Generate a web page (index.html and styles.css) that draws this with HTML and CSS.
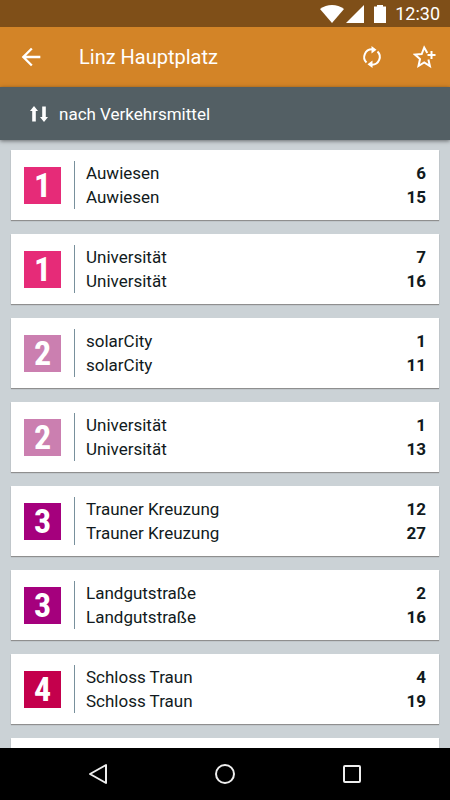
FILE: index.html
```
<!DOCTYPE html>
<html lang="de">
<head>
    <meta charset="UTF-8">
    <meta name="viewport" content="width=device-width, initial-scale=1.0">
    <title>Linz Hauptplatz</title>
    <link rel="stylesheet" href="styles.css">
</head>
<body>
    <div class="status-bar">
        <svg class="wifi" viewBox="0 0 24 18" aria-hidden="true"><path d="M0 4C7-1.300 17-1.300 24 4L12 18z"/></svg>
        <svg class="signal" viewBox="0 0 18 18" aria-hidden="true"><path d="M18 0v18H0z"/></svg>
        <svg class="battery" viewBox="0 0 12 18" aria-hidden="true"><path d="M3 0h6v1.500h3V18H0V1.500h3z"/></svg>
        <span>12:30</span>
    </div>

    <header class="toolbar">
        <button class="icon-btn" type="button" aria-label="Zurück">
            <svg viewBox="0 0 24 24"><path d="M20 11H7.830l5.590-5.590L12 4l-8 8 8 8 1.410-1.410L7.830 13H20z"/></svg>
        </button>
        <h1>Linz Hauptplatz</h1>
        <button class="icon-btn refresh" type="button" aria-label="Aktualisieren">
            <svg viewBox="0 0 24 24"><path class="line" d="M6.500 17.500A7.800 7.800 0 0 1 12 4.200M17.500 6.500A7.800 7.800 0 0 1 12 19.800"/><path d="M11.500 1l5 3.800-5 3.700zM12.500 23l-5-3.800 5-3.700z"/></svg>
        </button>
        <button class="icon-btn favorite" type="button" aria-label="Zu Favoriten hinzufügen">
            <svg viewBox="0 0 24 24"><path class="line" d="M14.300 8L11.200 2.500 8.700 9l-6.700.6 5 4.400-1.500 7 5.700-3.600 5.700 3.600-1.500-6.500M18.500 6v8M14.500 10h8"/></svg>
        </button>
    </header>

    <button class="sort" type="button">
        <svg viewBox="0 0 18 16" aria-hidden="true"><path d="M4 0l4 5H5.800v10.500H2.200V5H0zM14 16l4-5h-2.200V.5h-3.600V11H10z"/></svg>
        nach Verkehrsmittel
    </button>

    <main class="departures">
        <article class="card">
            <span class="line-no line-1">1</span>
            <div class="times">
                <p><span>Auwiesen</span><b>6</b></p>
                <p><span>Auwiesen</span><b>15</b></p>
            </div>
        </article>
        <article class="card">
            <span class="line-no line-1">1</span>
            <div class="times">
                <p><span>Universität</span><b>7</b></p>
                <p><span>Universität</span><b>16</b></p>
            </div>
        </article>
        <article class="card">
            <span class="line-no line-2">2</span>
            <div class="times">
                <p><span>solarCity</span><b>1</b></p>
                <p><span>solarCity</span><b>11</b></p>
            </div>
        </article>
        <article class="card">
            <span class="line-no line-2">2</span>
            <div class="times">
                <p><span>Universität</span><b>1</b></p>
                <p><span>Universität</span><b>13</b></p>
            </div>
        </article>
        <article class="card">
            <span class="line-no line-3">3</span>
            <div class="times">
                <p><span>Trauner Kreuzung</span><b>12</b></p>
                <p><span>Trauner Kreuzung</span><b>27</b></p>
            </div>
        </article>
        <article class="card">
            <span class="line-no line-3">3</span>
            <div class="times">
                <p><span>Landgutstraße</span><b>2</b></p>
                <p><span>Landgutstraße</span><b>16</b></p>
            </div>
        </article>
        <article class="card">
            <span class="line-no line-4">4</span>
            <div class="times">
                <p><span>Schloss Traun</span><b>4</b></p>
                <p><span>Schloss Traun</span><b>19</b></p>
            </div>
        </article>
        <article class="card"></article>
    </main>

    <nav class="nav-bar">
        <button type="button" aria-label="Zurück"><svg viewBox="0 0 24 24"><path d="M20 3v18L4 12z"/></svg></button>
        <button type="button" aria-label="Startseite"><svg viewBox="0 0 24 24"><circle cx="12" cy="12" r="9"/></svg></button>
        <button type="button" aria-label="Übersicht"><svg viewBox="0 0 24 24"><rect x="4" y="4" width="16" height="16" rx="1"/></svg></button>
    </nav>
</body>
</html>
```

FILE: styles.css
```
* {
    box-sizing: border-box;
}

body {
    margin: 0;
    height: 100vh;
    display: flex;
    flex-direction: column;
    overflow: hidden;
    background: #cbd2d6;
    color: #111a20;
    font-family: Roboto, sans-serif;
    font-size: 17px;
}

button {
    padding: 0;
    border: none;
    background: none;
    color: inherit;
    font: inherit;
    cursor: pointer;
}

svg {
    display: block;
    fill: currentColor;
}

.status-bar {
    display: flex;
    align-items: center;
    justify-content: flex-end;
    padding: 0 10px;
    background: #7f4f18;
    color: #fff;
    font-size: 18px;
    line-height: 27px;
}

.wifi {
    width: 24px;
    height: 18px;
}

.signal {
    width: 18px;
    height: 18px;
    margin: 0 10px 0 2px;
}

.battery {
    width: 12px;
    height: 18px;
    margin-right: 9px;
}

.toolbar {
    display: flex;
    align-items: center;
    height: 60px;
    padding: 0 13px 0 17px;
    background: #d38427;
    color: #fff;
}

.toolbar h1 {
    flex: 1;
    margin: 0 0 0 34px;
    font-size: 20px;
    font-weight: 400;
}

.icon-btn svg {
    width: 28px;
    height: 28px;
}

.refresh {
    margin-right: 29px;
}

.refresh svg,
.favorite svg {
    width: 24px;
    height: 24px;
}

.line {
    fill: none;
    stroke: currentColor;
    stroke-width: 2;
}

.sort {
    position: relative;
    display: flex;
    align-items: center;
    gap: 11px;
    height: 53px;
    padding: 0 30px;
    background: #535f64;
    box-shadow: 0 1px 4px rgba(0, 0, 0, 0.5);
    color: #fff;
}

.sort svg {
    width: 18px;
    height: 16px;
}

.departures {
    flex: 1;
    min-height: 0;
    overflow: hidden;
    padding: 10px 11px 0;
}

.card {
    display: flex;
    align-items: center;
    min-height: 70px;
    margin-bottom: 14px;
    padding: 11px 13px;
    background: #fff;
    box-shadow: 0 1px 1px #8f8f8f;
}

.line-no {
    width: 37px;
    margin-right: 13px;
    color: #fff;
    font-family: "Roboto Condensed", "Liberation Sans", sans-serif;
    font-size: 34px;
    font-weight: 700;
    line-height: 37px;
    text-align: center;
}

.line-1 {
    background: #e62b78;
}

.line-2 {
    background: #cb7fb0;
}

.line-3 {
    background: #a5007d;
}

.line-4 {
    background: #c4004c;
}

.times {
    flex: 1;
    padding-left: 11px;
    border-left: 1px solid #78909c;
}

.times p {
    display: flex;
    justify-content: space-between;
    margin: 0;
    line-height: 24px;
}

.nav-bar {
    display: flex;
    justify-content: center;
    align-items: center;
    gap: 103px;
    height: 52px;
    background: #000;
    color: #eee;
}

.nav-bar svg {
    width: 24px;
    height: 24px;
    fill: none;
    stroke: currentColor;
    stroke-width: 2;
    stroke-linejoin: round;
}
```
